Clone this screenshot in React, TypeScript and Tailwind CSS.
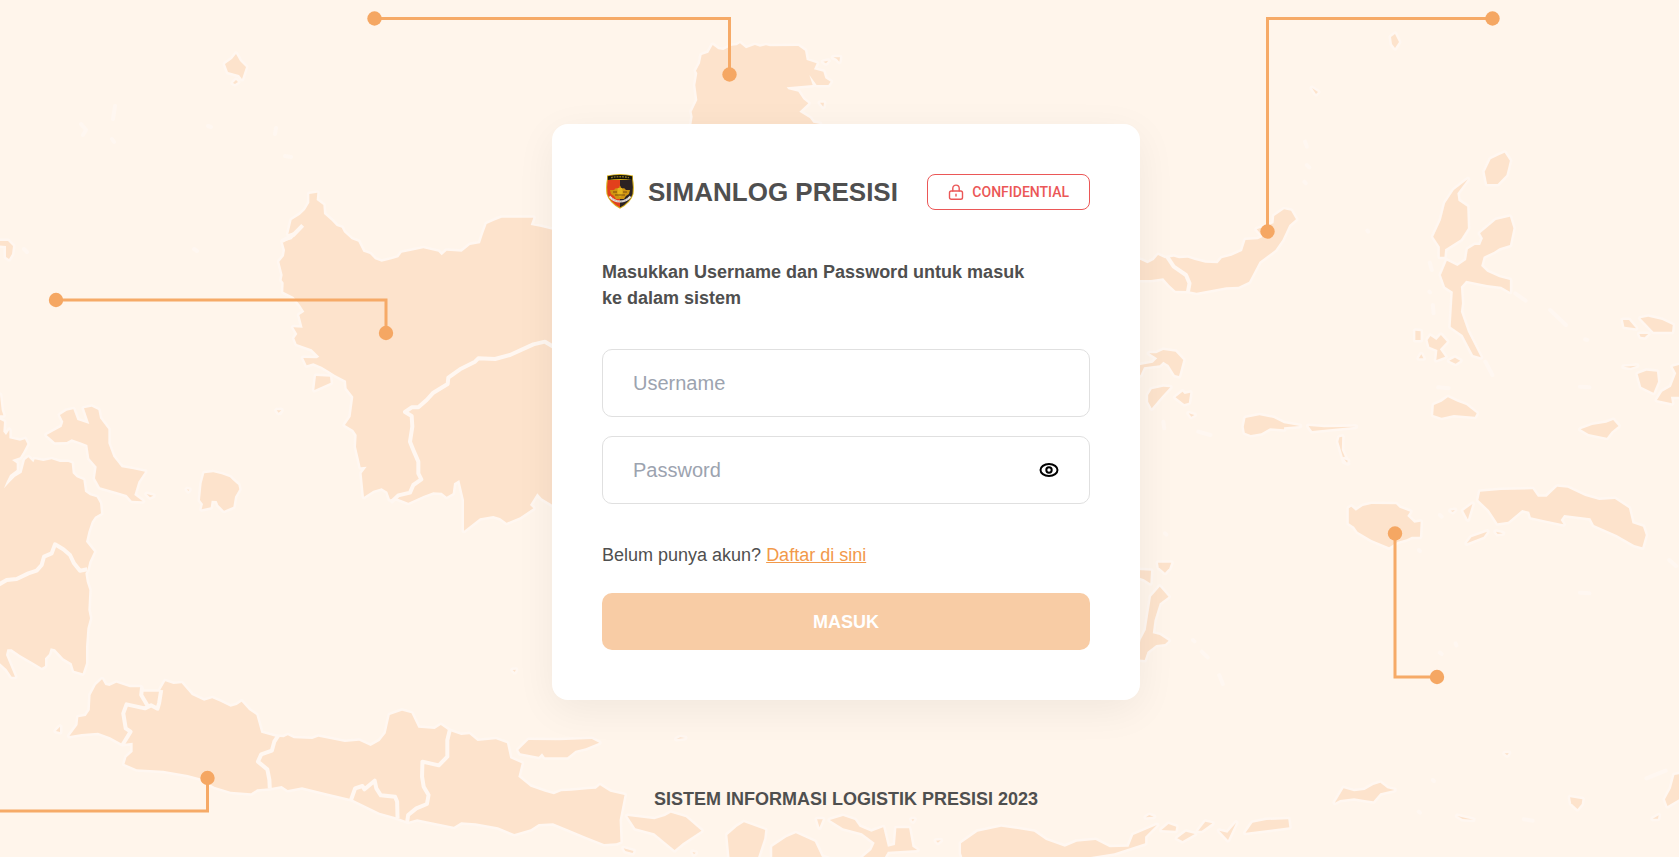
import { useState } from "react";

const LAND =
  "fill-[#fde3cc] stroke-[#fff7f1] stroke-[5px] [paint-order:stroke] [stroke-linejoin:round] [&_path]:[vector-effect:non-scaling-stroke]";
const BORDERS =
  "fill-none stroke-[#fff7f1] stroke-[4px] [stroke-linejoin:round] [&_path]:[vector-effect:non-scaling-stroke]";

function MapBackground() {
  return (
    <svg
      aria-hidden="true"
      viewBox="0 0 1679 857"
      preserveAspectRatio="xMidYMid slice"
      className="pointer-events-none absolute inset-0 h-full w-full"
    >
      {/* Sumatra and Bangka Belitung */}
      <g transform="translate(0 380) scale(.33333)">
        <g className={LAND}>
          <path d="M-10 40L0 45L5 90L10 106L-10 106Z" />
          <path d="M-10 115L12 125L10 155L18 165L28 150L28 175L60 182L75 178L82 192L70 215L60 232L36 240L50 250L50 270L30 285L20 305L12 325L30 305L45 290L65 278L75 240L85 232L100 247L104 238L130 243L155 238L180 246L205 246L215 250L218 280L230 292L250 300L255 335L270 346L290 352L300 370L303 400L285 410L275 425L265 455L258 485L282 515L268 545L262 570L256 580L260 605L268 630L265 690L270 715L262 745L258 800L258 850L248 880L222 872L215 850L190 835L165 808L152 805L147 822L135 835L135 858L125 863L100 848L60 825L35 808L22 808L18 825L45 890L35 890L20 868L0 850L-10 840Z" />
          <path d="M140 165L185 140L190 125L180 105L200 92L220 88L232 120L268 132L252 85L275 80L295 90L300 115L325 148L325 190L340 230L365 262L400 268L435 275L415 305L403 345L428 364L395 362L380 345L350 336L300 322L285 295L290 260L268 235L262 195L245 188L215 178L200 186L165 187Z" />
          <path d="M440 342L460 347L450 352Z" />
          <path d="M613 280L640 277L665 283L690 292L698 300L715 315L718 328L705 350L700 380L672 392L655 375L650 363L635 362L632 382L605 388L609 372L600 360L605 310Z" />
          <path d="M561 328L568 329L565 333Z" />
          <path d="M832 94L842 90L840 98Z" />
        </g>
        <g className={BORDERS}>
          <path d="M-4 614L20 600L50 597L85 580L110 572L125 555L132 530L155 520L165 493L190 508L210 525L222 550L240 572L262 568" />
        </g>
      </g>

      {/* Java and Madura */}
      <g transform="translate(0 660) scale(.40816 .33333)">
        <g className={LAND}>
          <path d="M170 228L190 195L192 172L210 168L220 150L222 105L235 75L250 58L258 75L268 78L285 68L318 82L345 82L348 95L390 95L405 64L425 72L445 70L470 105L500 122L520 115L540 125L565 140L580 135L592 125L610 150L628 165L640 218L675 230L695 232L705 226L720 235L765 237L780 230L845 246L880 242L908 258L930 243L945 220L955 165L985 152L1008 160L1025 203L1065 207L1080 195L1100 212L1130 225L1150 223L1170 243L1215 238L1242 250L1250 295L1278 310L1270 350L1300 380L1335 395L1357 403L1375 394L1400 392L1440 388L1460 386L1470 376L1495 395L1530 405L1518 480L1520 545L1510 550L1480 552L1435 530L1385 505L1355 490L1320 492L1300 508L1260 522L1220 502L1165 490L1130 487L1112 500L1070 490L1022 478L1000 485L970 472L930 458L862 418L800 400L740 382L705 390L690 378L660 385L630 388L615 400L565 395L525 380L490 355L460 345L400 332L335 328L305 312L310 292L325 275L325 248L300 252L270 232L240 218L200 222Z" />
          <path d="M1270 270L1295 240L1370 241L1450 237L1468 248L1435 265L1410 272L1390 292L1335 292L1328 280L1320 290L1275 280Z" />
          <path d="M137 213L147 200L147 216Z" />
          <path d="M1528 565L1552 573L1550 579L1532 573Z" />
          <path d="M1256 30L1264 29L1261 36Z" />
        </g>
        <g className={BORDERS}>
          <path d="M348 82L346 105L362 138M395 90L390 128L386 146L370 136L355 145L310 133L302 160L308 205L320 215L300 255" />
          <path d="M682 226L672 245L666 272L640 283L632 305L655 328L660 360L661 385" />
          <path d="M1102 210L1096 240L1096 290L1075 316L1035 305L1034 350L1038 380L1050 405L1046 432L1020 445L1000 465L997 490" />
          <path d="M860 420L870 385L888 378L893 388L918 362L922 385L933 406L968 410L973 425L974 475" />
        </g>
      </g>

      {/* Kalimantan */}
      <g transform="translate(260 180) scale(.33333)">
        <g className={LAND}>
          <path d="M148 42L172 38L170 60L190 75L192 102L215 122L230 138L245 143L252 157L275 178L295 185L310 215L330 222L345 238L365 245L395 238L415 232L425 218L455 212L490 205L535 215L545 226L560 212L605 215L630 195L660 190L668 165L680 132L702 122L725 113L820 113L812 135L840 140L880 150L900 150L900 990L870 970L845 955L832 940L810 975L820 985L780 1012L740 1028L720 1014L700 1008L660 1015L612 1052L612 960L598 900L582 910L578 940L560 950L545 938L520 937L490 948L445 968L410 955L390 958L382 935L365 925L340 932L312 950L305 880L320 860L302 862L295 830L288 800L290 765L280 750L255 735L272 710L280 650L260 625L258 602L225 585L205 572L185 560L160 550L140 556L130 534L170 535L178 530L155 508L110 492L103 475L112 462L100 442L128 443L118 405L133 395L120 375L100 350L70 335L71 308L65 300L68 285L58 245L72 228L75 210L68 185L95 178L130 135L105 155L85 162L95 120L120 104L135 90L148 68Z" />
          <path d="M168 588L210 590L212 608L185 620L163 630Z" />
          <path d="M50 691L64 691L56 698Z" />
        </g>
        <g className={BORDERS}>
          <path d="M66 183L100 165L128 136" />
          <path d="M880 500L855 485L820 493L750 525L705 537L655 535L645 545L600 568L565 593L563 612L520 638L500 660L475 682L455 682L435 696L455 708L457 740L450 785L462 815L475 845L475 880L484 898L460 915L450 938L415 946L392 968" />
        </g>
      </g>

      {/* Northern Kalimantan */}
      <g transform="translate(640 0) scale(.33333)" className={LAND}>
        <path d="M150 400L158 350L155 335L172 300L166 255L172 220L168 212L180 190L185 165L205 158L218 135L235 148L250 150L275 137L290 136L300 130L318 145L345 135L360 140L378 136L390 139L475 138L495 152L500 180L530 190L522 208L550 215L556 235L572 245L565 255L530 255L508 225L518 255L440 262L445 268L475 275L490 298L505 310L478 335L510 355L520 368L540 372L540 400Z" />
        <path d="M550 185L565 182L558 190Z" />
        <path d="M580 172L600 172L598 185L590 176Z" />
        <path d="M540 308L552 308L550 320Z" />
      </g>

      {/* Sulawesi, Maluku and the western tip of Papua */}
      <g transform="translate(1130 140) scale(.35013 .33333)">
        <g className={LAND}>
          <path d="M0 355L30 360L50 370L68 360L80 345L100 355L125 350L140 355L165 353L185 360L215 368L250 370L262 355L290 347L320 333L330 300L365 298L380 290L362 268L410 250L412 228L440 208L460 212L474 238L455 255L435 300L415 330L370 365L340 425L310 440L275 442L190 458L165 453L130 452L112 435L95 415L60 420L0 420Z" />
          <path d="M0 690L30 675L65 668L78 655L55 640L75 640L95 630L130 635L152 660L140 708L128 705L110 675L95 665L85 676L40 682L30 705L0 720Z" />
          <path d="M62 748L95 740L115 742L90 770L62 805L52 785L52 765Z" />
          <path d="M130 772L150 755L156 762L172 758L168 788L155 792Z" />
          <path d="M168 820L184 825L175 830Z" />
          <path d="M325 860L330 834L370 826L410 834L440 850L485 858L440 862L440 868L400 865L375 880L345 885L328 878Z" />
          <path d="M510 858L555 862L645 860L570 868L520 873Z" />
          <path d="M598 892L606 890L605 930L622 970L612 965L595 905Z" />
          <path d="M965 118L935 160L938 182L963 200L965 265L945 298L900 328L898 350L885 350L885 320L866 290L888 240L900 190L925 150Z" />
          <path d="M1045 240L1085 230L1095 265L1085 315L1055 325L1040 335L1010 350L1003 378L1020 395L1055 412L1085 420L1085 455L1060 440L1020 435L960 422L945 440L948 490L945 515L965 575L1002 652L980 645L950 585L916 560L920 490L922 455L900 440L888 405L905 362L935 378L960 360L965 328L985 315L1000 315L1008 295L1000 280Z" />
          <path d="M1070 38L1085 62L1075 105L1050 132L1020 132L1013 95L1030 58L1055 45Z" />
          <path d="M815 572L830 574L830 600L815 600Z" />
          <path d="M850 600L858 588L875 600L888 585L905 605L885 628L900 650L875 660L878 630L855 620Z" />
          <path d="M825 655L832 643L838 655Z" />
          <path d="M912 662L928 653L943 662L930 671Z" />
          <path d="M866 825L868 795L890 785L908 772L935 785L960 795L990 820L985 830L925 825L890 833Z" />
          <path d="M1287 868L1320 855L1360 848L1380 840L1395 858L1375 875L1362 893L1310 882Z" />
          <path d="M1408 540L1425 540L1445 565L1412 560Z" />
          <path d="M1458 535L1480 530L1520 540L1550 555L1548 575L1495 575Z" />
          <path d="M1455 582L1480 582L1470 592L1458 590Z" />
          <path d="M1410 680L1430 679L1448 677L1430 683Z" />
          <path d="M1450 702L1475 692L1505 695L1508 725L1495 758L1460 740Z" />
          <path d="M1550 680L1580 672L1580 770L1545 770L1548 790L1505 780L1520 755L1545 740L1560 700Z" />
        </g>
        <g className={BORDERS}>
          <path d="M106 350L125 380L160 405L170 430L165 458" />
          <path d="M500 5L505 20M505 75L512 82M498 125L502 130M856 368L862 390M855 455L857 457M865 495L867 520M1100 460L1130 482M1200 510L1245 555M1015 665L1035 705M880 742L910 745M1285 740L1312 742M95 845L98 865M195 875L230 885M1300 598L1306 600M678 272L680 275" strokeLinecap="round" />
        </g>
      </g>

      {/* Buton, Seram and the Banda Sea */}
      <g transform="translate(1130 460) scale(.35013 .33333)">
        <g className={LAND}>
          <path d="M625 145L632 140L645 152L665 138L690 132L760 133L770 143L800 155L792 168L812 188L830 185L828 230L805 230L790 238L765 245L740 262L690 240L650 215L640 200L625 190Z" />
          <path d="M1000 95L1060 90L1150 88L1165 110L1190 110L1220 80L1250 83L1300 108L1340 120L1385 117L1425 145L1435 190L1465 200L1473 225L1463 262L1440 255L1390 225L1325 195L1315 175L1240 165L1230 180L1238 193L1190 182L1145 172L1140 155L1120 150L1080 185L1050 190L1025 150L995 120Z" />
          <path d="M952 152L978 132L965 178Z" />
          <path d="M962 250L975 232L1020 215L1010 230Z" />
          <path d="M1045 215L1065 220L1050 222Z" />
          <path d="M916 152L928 150L922 156Z" />
          <path d="M80 308L118 308L112 325L100 338L82 322Z" />
          <path d="M20 330L60 332L58 370L40 358L20 350Z" />
          <path d="M60 410L85 380L110 410L85 430L70 480L65 520L85 525L110 542L100 552L75 555L50 575L42 600L20 598L30 540L45 510Z" />
          <path d="M585 1028L610 985L640 994L670 990L695 975L715 968L735 985L755 990L715 1000L695 1024L670 1020L640 1015L600 1020Z" />
          <path d="M1257 1012L1292 1018L1290 1032L1278 1047L1260 1030Z" />
          <path d="M1555 945L1580 940L1580 1010L1535 1038L1528 1018L1545 985Z" />
          <path d="M1493 1076L1510 1066L1508 1076Z" />
          <path d="M935 1068L980 1079L950 1077Z" />
          <path d="M1070 880L1082 879L1077 886Z" />
          <path d="M330 1118L350 1088L390 1080L452 1078L455 1102Z" />
          <path d="M255 1112L278 1118L303 1088L280 1140Z" />
          <path d="M195 1112L215 1085L235 1090L205 1112Z" />
          <path d="M135 1135L160 1115L185 1122L150 1143Z" />
          <path d="M90 1110L110 1092L132 1100L130 1112Z" />
          <path d="M45 1072L55 1065L68 1070Z" />
          <path d="M612 -2L622 2L620 8Z" />
        </g>
        <g className={BORDERS}>
          <path d="M100 220L104 224M180 540L184 544M205 575L222 592M255 645L265 672M825 270L828 273M885 165L890 170M1285 398L1312 400M885 578L890 582M930 550L932 556M865 960L868 963M825 1055L828 1058M1125 1078L1150 1082M1540 300L1560 318M1475 955L1530 932" strokeLinecap="round" />
        </g>
      </g>

      {/* Bali, Lombok, Sumbawa and Flores */}
      <g transform="translate(600 690) scale(.47194 .33333)" className={LAND}>
        <path d="M58 378L115 388L138 378L150 368L182 382L215 422L175 460L158 480L115 430L75 415Z" />
        <path d="M270 435L290 410L305 397L350 420L348 445L335 501L275 510Z" />
        <path d="M365 470L395 442L415 430L455 455L470 500L490 510L365 510Z" />
        <path d="M487 390L515 378L540 390L550 410L575 425L600 412L610 470L625 465L628 415L655 415L662 470L672 480L610 485L600 510L550 510L575 480L582 458L555 430L515 415Z" />
        <path d="M460 388L472 388L465 412Z" />
        <path d="M765 460L800 425L850 410L880 416L920 425L945 450L985 470L1010 455L1050 450L1080 472L1120 470L1130 435L1180 405L1155 440L1155 460L1090 490L1040 501L1030 510L770 510L765 490Z" />
        <path d="M162 147L170 142L180 144Z" />
        <path d="M196 486L203 488L199 493Z" />
        <path d="M712 452L722 451L716 458Z" />
        <path d="M660 388L666 388L663 394Z" />
      </g>

      {/* Scattered islands of the northern seas */}
      <g className={LAND}>
        <path d="M225 64L232 59L236 54L240 61L246 67L244 73L242 79L239 75L228 72Z" />
        <path d="M233 83L236 80L238 82L235 84Z" />
        <path d="M-4 241L8 241L13 246L12 254L9 259L6 257L6 246L-4 245Z" />
        <path d="M1391 37L1395 34L1399 42L1395 48L1392 44Z" />
        <path d="M1312 88L1318 92L1316 94Z" />
      </g>
      <g className={BORDERS} strokeLinecap="round">
        <path d="M81 124L86 130L83 135M115 106L113 119M112 139L114 142M208 126L211 127M276 128L275 134M285 156L291 157M24 249L27 252M194 249L197 251" />
      </g>

      {/* Connectors */}
      <g className="fill-none stroke-[#f6aa67] stroke-[3px]">
        <path d="M374 18.500H729.500V74" />
        <path d="M1493 18.500H1267.500V231" />
        <path d="M55 300H386V333" />
        <path d="M0 811H207.500V778" />
        <path d="M1395 534V677H1437" />
      </g>
      <g className="fill-[#f5a763]">
        <circle cx="374.500" cy="18.500" r="7.200" />
        <circle cx="729.500" cy="74.500" r="7.200" />
        <circle cx="1492.500" cy="18.500" r="7.200" />
        <circle cx="1267.500" cy="231.500" r="7.200" />
        <circle cx="56" cy="300" r="7.200" />
        <circle cx="386" cy="333" r="7.200" />
        <circle cx="207.500" cy="778" r="7.200" />
        <circle cx="1395" cy="533.500" r="7.200" />
        <circle cx="1437" cy="677" r="7.200" />
      </g>
    </svg>
  );
}

function Emblem() {
  return (
    <svg aria-hidden="true" viewBox="0 0 36 36" className="h-9 w-9 shrink-0">
      <path d="M5 1.500Q18 -1.500 31 1.500V5Q32.500 12 31.500 20Q29 29 18 34.800Q7 29 4.500 20Q3.500 12 5 5Z" fill="#d9b21c" />
      <path d="M5.800 6H18V33.600Q8 28 5.500 20Q4.600 13 5.800 6Z" fill="#e2401c" />
      <path d="M18 6H30.200Q31.400 13 30.500 20Q28 28 18 33.600Z" fill="#2b2222" />
      <path d="M5.800 2.300Q18 -.4 30.200 2.300V6Q18 3.800 5.800 6Z" fill="#15130c" />
      <path d="M9 3.600Q18 1.800 27 3.600" fill="none" stroke="#8f7a24" strokeWidth="1.400" strokeDasharray="1.800 1" />
      <path d="M8 16L12 16L14 14L16 15L18 11.500L20 15L22 14L24 16L28 16L27 20L24 22L22 25H14L12 22L9 20Z" fill="#cf9411" />
      <path d="M15.500 14H20.500V21L18 23L15.500 21Z" fill="#e5b51d" />
      <path d="M11 18H15M21 18H25M13 21H23" stroke="#7b4c0d" strokeWidth="1" />
      <path d="M7.500 22.500Q12 27.500 18 27.500T28.500 22.500" fill="none" stroke="#e8e3de" strokeWidth="2" />
      <path d="M10 24.500Q14 27.500 18 27.500T26 24.500" fill="none" stroke="#888" strokeWidth=".7" strokeDasharray="1 1" />
    </svg>
  );
}

function LockIcon() {
  return (
    <svg aria-hidden="true" viewBox="0 0 16 16" className="h-4 w-4 fill-none stroke-[#eb5757]" strokeWidth="1.400" strokeLinecap="round">
      <rect x="1.500" y="7" width="13" height="8.200" rx="1.800" />
      <path d="M4.800 7V4.300a3.200 3.200 0 0 1 6.400 0V7M8 10.300V12" />
    </svg>
  );
}

function EyeIcon() {
  return (
    <svg aria-hidden="true" viewBox="0 0 20 16" className="h-4 w-5 fill-none stroke-black" strokeWidth="2">
      <path d="M1.500 8C1.500 5 5 2 10 2S18.500 5 18.500 8S15 14 10 14S1.500 11 1.500 8Z" />
      <circle cx="10" cy="8" r="2.700" />
    </svg>
  );
}

const FIELD =
  "h-[68px] w-full rounded-[10px] border border-[#e0e0e0] bg-white px-[30px] text-xl text-[#4f4f4f] placeholder:text-[#9ca3af] focus:border-[#f2994a] focus:outline-none";

export default function App() {
  const [visible, setVisible] = useState(false);

  return (
    <div className="relative isolate min-h-screen overflow-hidden bg-[#fff5eb] font-['Liberation_Sans',Arial,sans-serif] text-lg/[26px] text-[#4f4f4f]">
      <MapBackground />
      <main className="relative flex flex-col items-center gap-[86px] pt-[124px] pb-11 pl-[13px]">
        <section className="w-full max-w-[588px] rounded-2xl bg-white p-[50px] shadow-[0_10px_40px_rgba(0,0,0,0.06)]">
          <header className="flex items-center justify-between">
            <div className="flex items-center gap-2.5">
              <Emblem />
              <h1 className="text-[26px]/9 font-extrabold whitespace-nowrap">SIMANLOG PRESISI</h1>
            </div>
            <div className="flex h-9 items-center gap-2 rounded-lg border border-[#eb5757] px-5 font-[Roboto,sans-serif] text-sm text-[#eb5757]">
              <LockIcon />
              <span className="font-medium">CONFIDENTIAL</span>
            </div>
          </header>
          <form onSubmit={(event) => event.preventDefault()}>
            <p className="mt-[49px] max-w-[440px] font-bold">Masukkan Username dan Password untuk masuk ke dalam sistem</p>
            <div className="mt-[38px] flex flex-col gap-[19px]">
              <input type="text" aria-label="Username" placeholder="Username" className={FIELD} />
              <div className="relative">
                <input type={visible ? "text" : "password"} aria-label="Password" placeholder="Password" className={FIELD} />
                <button
                  type="button"
                  aria-label="Tampilkan password"
                  onClick={() => setVisible(!visible)}
                  className="absolute inset-y-0 right-[31px] flex items-center"
                >
                  <EyeIcon />
                </button>
              </div>
            </div>
            <p className="mt-[38px]">
              Belum punya akun?{" "}
              <a href="#daftar" className="text-[#f2994a] underline">
                Daftar di sini
              </a>
            </p>
            <button type="submit" className="mt-[25px] h-[57px] w-full rounded-[10px] bg-[#f8cca5] font-bold text-white">
              MASUK
            </button>
          </form>
        </section>
        <footer className="font-bold">SISTEM INFORMASI LOGISTIK PRESISI 2023</footer>
      </main>
    </div>
  );
}
